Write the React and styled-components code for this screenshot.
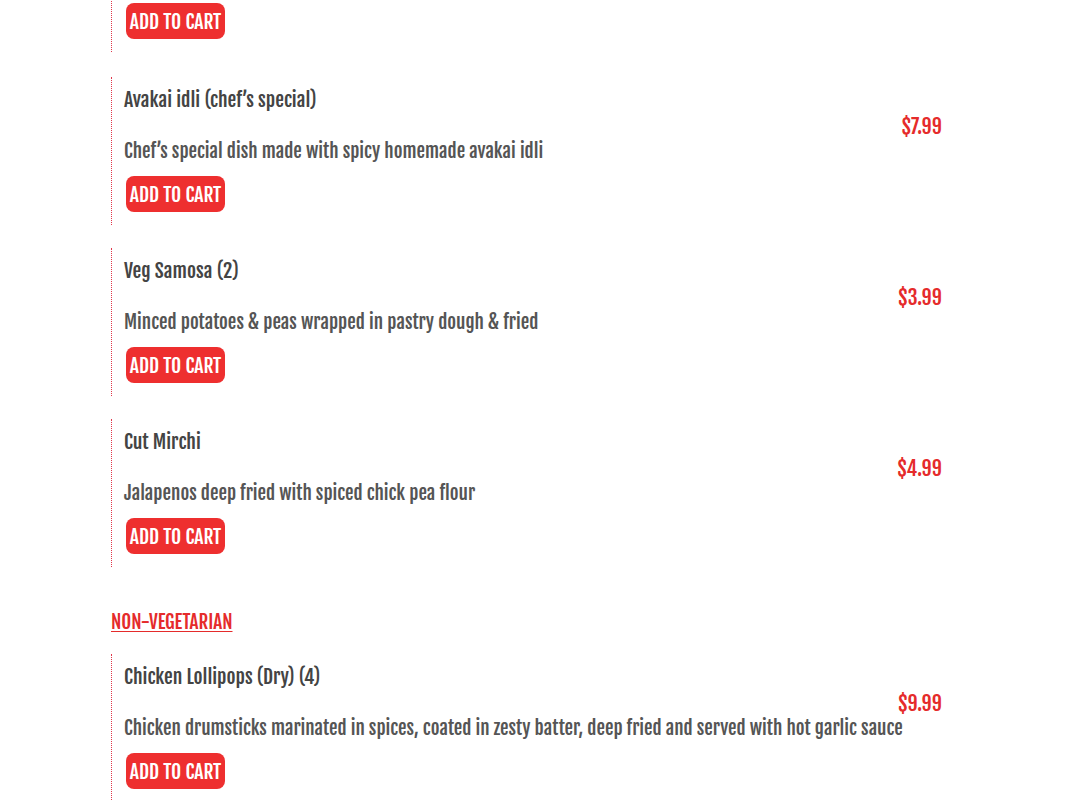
import React from "react";
import styled, { createGlobalStyle } from "styled-components";

const GlobalStyle = createGlobalStyle`
  body {
    margin: 0;
    background: #fff;
    font-family: "Fjalla One", "Open Sans Condensed", "Liberation Sans", sans-serif;
  }
`;

const Page = styled.div`
  width: 831px;
  padding-left: 111px;
  margin-top: -96px;
`;

const Category = styled.h2`
  margin: 42px 0 19px;
  font-size: 19px;
  font-weight: normal;
  line-height: 26px;
  color: #e52b2b;
  text-decoration: underline;
  text-underline-offset: 2px;
  text-decoration-thickness: 1px;
`;

const Item = styled.div`
  border-left: 1px dotted #e0364a;
  padding: 8px 0 13px 12px;
  margin-bottom: ${(p) => (p.first ? "25px" : "23px")};
`;

const Top = styled.div`
  display: flex;
  align-items: center;
  justify-content: space-between;
`;

const Info = styled.div`
  display: flex;
  flex-direction: column;
  gap: 21px;
  min-width: 0;
`;

const Title = styled.div`
  font-size: 19.5px;
  line-height: 30px;
  color: #444;
`;

const Desc = styled.div`
  font-size: 19px;
  line-height: 30px;
  color: #555;
  white-space: nowrap;
`;

const Price = styled.div`
  flex-shrink: 0;
  font-size: 20px;
  color: #e52b2b;
  margin-top: 2px;
`;

const CartButton = styled.button`
  margin: 10px 0 0 2px;
  width: 99px;
  height: 36px;
  border: none;
  border-radius: 8px;
  background: #ee2f2f;
  color: #fff;
  font-family: inherit;
  font-size: 19.5px;
  padding: 0;
  cursor: pointer;
`;

const sections = [
  {
    items: [
      { name: "Veg Manchurian", desc: "Vegetable dumplings tossed in manchurian sauce", price: "$7.99" },
      { name: "Avakai idli (chef’s special)", desc: "Chef’s special dish made with spicy homemade avakai idli", price: "$7.99" },
      { name: "Veg Samosa (2)", desc: "Minced potatoes & peas wrapped in pastry dough & fried", price: "$3.99" },
      { name: "Cut Mirchi", desc: "Jalapenos deep fried with spiced chick pea flour", price: "$4.99" },
    ],
  },
  {
    title: "NON-VEGETARIAN",
    items: [
      {
        name: "Chicken Lollipops (Dry) (4)",
        desc: "Chicken drumsticks marinated in spices, coated in zesty batter, deep fried and served with hot garlic sauce",
        price: "$9.99",
      },
    ],
  },
];

const MenuItem = ({ name, desc, price, first }) => (
  <Item first={first}>
    <Top>
      <Info>
        <Title>{name}</Title>
        <Desc>{desc}</Desc>
      </Info>
      <Price>{price}</Price>
    </Top>
    <CartButton>ADD TO CART</CartButton>
  </Item>
);

export default function App() {
  return (
    <>
      <GlobalStyle />
      <Page>
        {sections.map((s, i) => (
          <React.Fragment key={i}>
            {s.title && <Category>{s.title}</Category>}
            {s.items.map((it, j) => (
              <MenuItem key={it.name} first={i === 0 && j === 0} {...it} />
            ))}
          </React.Fragment>
        ))}
      </Page>
    </>
  );
}
